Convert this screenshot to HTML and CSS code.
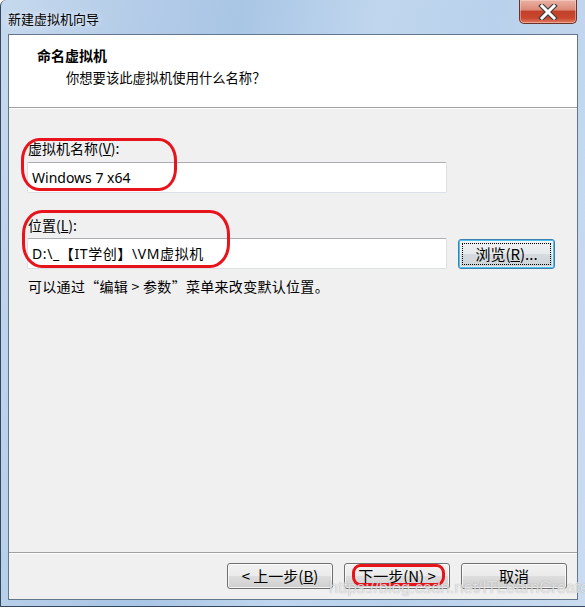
FILE: index.html
```html
<!DOCTYPE html>
<html lang="zh-CN">
<head>
<meta charset="utf-8">
<title>新建虚拟机向导</title>
<link rel="stylesheet" href="styles.css">
</head>
<body>
<div class="window">
  <div class="titlebar">
    <span class="title">新建虚拟机向导</span>
    <div class="close">
      <svg width="20" height="16" viewBox="0 0 20 16">
        <path d="M4 2 L16 14 M16 2 L4 14" stroke="#3b3b3b" stroke-width="5.2" stroke-linecap="square" fill="none"/>
        <path d="M4 2 L16 14 M16 2 L4 14" stroke="#ffffff" stroke-width="3" stroke-linecap="square" fill="none"/>
      </svg>
    </div>
  </div>
  <div class="client">
    <div class="header">
      <div class="h-title">命名虚拟机</div>
      <div class="h-sub">你想要该此虚拟机使用什么名称？</div>
    </div>
    <div class="body">
      <div class="label">虚拟机名称(<u>V</u>):</div>
      <div class="row">
        <div class="input">Windows 7 x64</div>
      </div>
      <div class="label label2">位置(<u>L</u>):</div>
      <div class="row">
        <div class="input input-path">D:\_【IT学创】\VM虚拟机</div>
        <div class="btn browse"><span class="focus">浏览(<u>R</u>)...</span></div>
      </div>
      <div class="hint">可以通过“编辑 &gt; 参数”菜单来改变默认位置。</div>
    </div>
    <div class="footer">
      <div class="btn">&lt; 上一步(<u>B</u>)</div>
      <div class="btn">下一步(<u>N</u>) &gt;</div>
      <div class="btn">取消</div>
    </div>
  </div>
  <div class="mark mark1"></div>
  <div class="mark mark2"></div>
  <div class="mark mark3"></div>
  <div class="watermark">https://blog.csdn.net/ITLearnCreate</div>
</div>
</body>
</html>
```
FILE: styles.css
```css
html, body {
  margin: 0;
  padding: 0;
  background: #ffffff;
}

body {
  font-family: "Noto Sans", "Noto Sans CJK SC", sans-serif;
  font-size: 13px;
  color: #000;
}

.window {
  position: relative;
  width: 585px;
  height: 607px;
  box-sizing: border-box;
  border-left: 1px solid #34475d;
  border-bottom: 1px solid #34475d;
  border-top-left-radius: 6px;
  padding: 0 7px 6px 7px;
  background: linear-gradient(100deg, #c6d9ee 0%, #b4cce8 20%, #a9c6e5 35%, #c0d6ee 55%, #b9d1ec 72%, #cbdcef 100%);
  display: flex;
  flex-direction: column;
}

.titlebar {
  height: 34px;
  margin: 0 -7px;
  padding-left: 7px;
  display: flex;
  justify-content: space-between;
  align-items: flex-start;
  border-top-left-radius: 6px;
}

.title {
  font-family: "Noto Sans CJK SC", sans-serif;
  font-size: 13px;
  line-height: 18px;
  margin-top: 10px;
  color: #000;
  text-shadow: 0 0 6px rgba(255, 255, 255, 0.9);
}

.close {
  width: 58px;
  height: 24px;
  margin-right: 8px;
  box-sizing: border-box;
  border: 1px solid #6c3226;
  border-top: none;
  border-radius: 0 0 5px 5px;
  background: linear-gradient(#eab3a6 0%, #dc8a78 42%, #c2412a 50%, #c9462d 78%, #de7d62 100%);
  box-shadow: inset 0 0 0 1px rgba(255, 220, 210, 0.45);
  display: flex;
  align-items: center;
  justify-content: center;
}

.close svg {
  display: block;
}

.client {
  flex: 1;
  border: 1px solid #63768c;
  background: #f0f0f0;
  display: flex;
  flex-direction: column;
}

.header {
  height: 73px;
  box-sizing: border-box;
  background: #ffffff;
  border-bottom: 1px solid #a0a0a0;
  padding: 10px 0 0 28px;
  flex: none;
}

.h-title {
  font-family: "Noto Sans CJK SC", sans-serif;
  font-weight: bold;
  font-size: 14px;
  line-height: 20px;
}

.h-sub {
  font-family: "Noto Sans CJK SC", sans-serif;
  font-size: 13.3px;
  line-height: 18px;
  margin-top: 4px;
  padding-left: 29px;
}

.body {
  flex: 1;
  border-top: 1px solid #ffffff;
  padding: 30px 0 0 18px;
  display: flex;
  flex-direction: column;
}

.label {
  font-family: "Noto Sans CJK SC", sans-serif;
  font-size: 14px;
  line-height: 18px;
  padding-left: 1px;
  margin-bottom: 5px;
}

.label2 {
  margin-top: 23px;
  margin-bottom: 4px;
}

.row {
  display: flex;
  align-items: flex-start;
}

.input {
  width: 420px;
  height: 31px;
  box-sizing: border-box;
  background: #ffffff;
  border: 1px solid #dbe0e8;
  border-top-color: #abadb3;
  border-radius: 2px;
  padding-left: 4px;
  font-family: "Noto Sans", "Noto Sans CJK SC", sans-serif;
  font-size: 14px;
  line-height: 29px;
  white-space: nowrap;
}

.input-path {
  letter-spacing: 0.6px;
}

.hint {
  font-family: "Noto Sans CJK SC", sans-serif;
  font-size: 14px;
  line-height: 18px;
  margin-top: 8px;
  padding-left: 1px;
  letter-spacing: 0.3px;
}

.btn {
  width: 106px;
  height: 26px;
  box-sizing: border-box;
  border: 1px solid #707070;
  border-radius: 3px;
  background: linear-gradient(#f2f2f2 0%, #ebebeb 48%, #dddddd 52%, #cfcfcf 100%);
  box-shadow: inset 0 0 0 1px rgba(255, 255, 255, 0.75);
  display: flex;
  align-items: center;
  justify-content: center;
  font-family: "Noto Sans CJK SC", sans-serif;
  font-size: 15px;
  line-height: 18px;
  white-space: nowrap;
}

.browse {
  width: 97px;
  height: 30px;
  margin-left: 11px;
  margin-top: 1px;
  border-color: #3c7fb1;
  background: linear-gradient(#f0f0f0 0%, #e8ebee 48%, #d6dadf 52%, #cdd3d8 100%);
  box-shadow: inset 0 0 0 1px #4cc2f0, inset 0 0 0 2px rgba(255, 255, 255, 0.5);
  padding: 3px;
}

.browse .focus {
  flex: 1;
  align-self: stretch;
  border: 1px dotted #000;
  display: flex;
  align-items: center;
  justify-content: center;
}

.footer {
  flex: none;
  height: 47px;
  box-sizing: border-box;
  border-top: 1px solid #a0a0a0;
  box-shadow: inset 0 1px 0 #ffffff;
  padding: 10px 10px 0 0;
  display: flex;
  justify-content: flex-end;
  gap: 11px;
}

.mark {
  position: absolute;
  border: 3px solid #e8141c;
  box-sizing: border-box;
  pointer-events: none;
}

.mark1 {
  left: 20px;
  top: 138px;
  width: 156px;
  height: 53px;
  border-radius: 18px / 22px;
}

.mark2 {
  left: 21px;
  top: 210px;
  width: 208px;
  height: 58px;
  border-radius: 20px / 24px;
}

.mark3 {
  left: 351px;
  top: 564px;
  width: 93px;
  height: 22px;
  border-radius: 8px / 9px;
}

.watermark {
  position: absolute;
  left: 328px;
  top: 578px;
  font-family: "Liberation Sans", Arial, sans-serif;
  font-size: 16.6px;
  line-height: 20px;
  color: rgba(255, 255, 255, 0.7);
  text-shadow: 0 0 1px rgba(90, 90, 90, 0.55);
  pointer-events: none;
  white-space: nowrap;
}
```
